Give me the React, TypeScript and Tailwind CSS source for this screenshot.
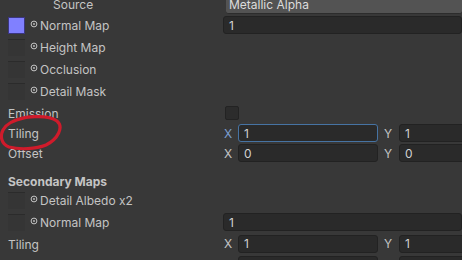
import React from "react";

const font = { fontFamily: "Inter, 'Noto Sans', sans-serif" };

function Dot() {
  return (
    <svg width="8" height="8" viewBox="0 0 8 8" className="mr-[2px] -mt-[5px] shrink-0">
      <circle cx="4" cy="4" r="2.9" fill="none" stroke="#c4c4c4" strokeWidth="1" />
      <circle cx="4" cy="4" r="0.9" fill="#c4c4c4" />
    </svg>
  );
}

function Swatch({ color }: { color?: string }) {
  if (color) {
    return <div className="w-[17px] h-[17px] shrink-0 border border-[#3b3680]" style={{ background: color }} />;
  }
  return <div className="w-[17px] h-[17px] shrink-0 bg-[#353535] border-t border-[#2b2b2b]" />;
}

function Field({ value, focus, className = "" }: { value: string; focus?: boolean; className?: string }) {
  return (
    <div
      className={
        "h-[18px] rounded-[3px] bg-[#2a2a2a] flex items-center pl-[5px] pt-[1px] text-[12px] text-[#d2d2d2] border " +
        (focus ? "border-[#4673a3]" : "border-[#222222]") +
        " " +
        className
      }
    >
      {value}
    </div>
  );
}

function TexRow({ label, color, value }: { label: string; color?: string; value?: string }) {
  return (
    <div className="h-[22px] flex items-center">
      <div className="w-[223px] flex items-center pl-[8px] shrink-0">
        <Swatch color={color} />
        <div className="ml-[5px] flex items-center pt-[2px]">
          <Dot />
          <span>{label}</span>
        </div>
      </div>
      {value !== undefined && <Field value={value} className="w-[260px] h-[17px]" />}
    </div>
  );
}

function VecRow({ label, x, y, focus, h = 20 }: { label: string; x: string; y: string; focus?: boolean; h?: number }) {
  return (
    <div className={"flex items-center " + (h === 21 ? "h-[21px]" : "h-[20px]")}>
      <div className="w-[223px] pl-[8px] pt-[2px] shrink-0">{label}</div>
      <div className={"w-[15px] pl-[1px] pt-[1px] shrink-0 " + (focus ? "text-[#7c9fcf]" : "")}>X</div>
      <Field value={x} focus={focus} className="w-[140px] shrink-0" />
      <div className="w-[21px] pl-[6px] pt-[1px] shrink-0">Y</div>
      <Field value={y} className="w-[140px] shrink-0" />
    </div>
  );
}

export default function App() {
  return (
    <div className="relative w-[462px] h-[260px] overflow-hidden bg-[#383838] text-[#c4c4c4] text-[12px]" style={font}>
      <div className="-mt-[6px] flex flex-col">
        <div className="h-[20px] flex items-center">
          <div className="w-[223px] pl-[53px] pt-[2px] shrink-0">Source</div>
          <div className="ml-[3px] w-[260px] h-[18px] mt-[1px] bg-[#535353] border-b border-[#2c2c2c] rounded-[3px] pl-[3px] pt-[1px] flex items-center text-[#dcdcdc]">
            Metallic Alpha
          </div>
        </div>
        <TexRow label="Normal Map" color="#8080ff" value="1" />
        <TexRow label="Height Map" />
        <TexRow label="Occlusion" />
        <TexRow label="Detail Mask" />
        <div className="h-[21px] flex items-center">
          <div className="w-[223px] pl-[8px] pt-[2px] shrink-0">Emission</div>
          <div className="ml-[2px] w-[14px] h-[14px] rounded-[2px] bg-[#2c2c2c] border border-[#232323]" />
        </div>
        <VecRow label="Tiling" x="1" y="1" focus />
        <VecRow label="Offset" x="0" y="0" />
        <div className="h-[9px]" />
        <div className="h-[17px] flex items-center pl-[8px] pt-[2px] font-bold">Secondary Maps</div>
        <TexRow label="Detail Albedo x2" />
        <TexRow label="Normal Map" value="1" />
        <VecRow label="Tiling" x="1" y="1" h={21} />
        <div className="h-[1px]" />
        <VecRow label="Offset" x="0" y="0" />
      </div>
      <svg className="absolute left-0 top-[112px] pointer-events-none" width="66" height="40" viewBox="0 0 66 40">
        <path
          d="M 12 10 C 22 4, 48 2, 57 9 C 64 15, 58 27, 46 33 C 36 37, 20 38, 9 35 C 1 32, 0 24, 3 18 C 6 12, 14 8, 24 6"
          fill="none"
          stroke="#cf1b2b"
          strokeWidth="3.2"
          strokeLinecap="round"
        />
      </svg>
    </div>
  );
}
